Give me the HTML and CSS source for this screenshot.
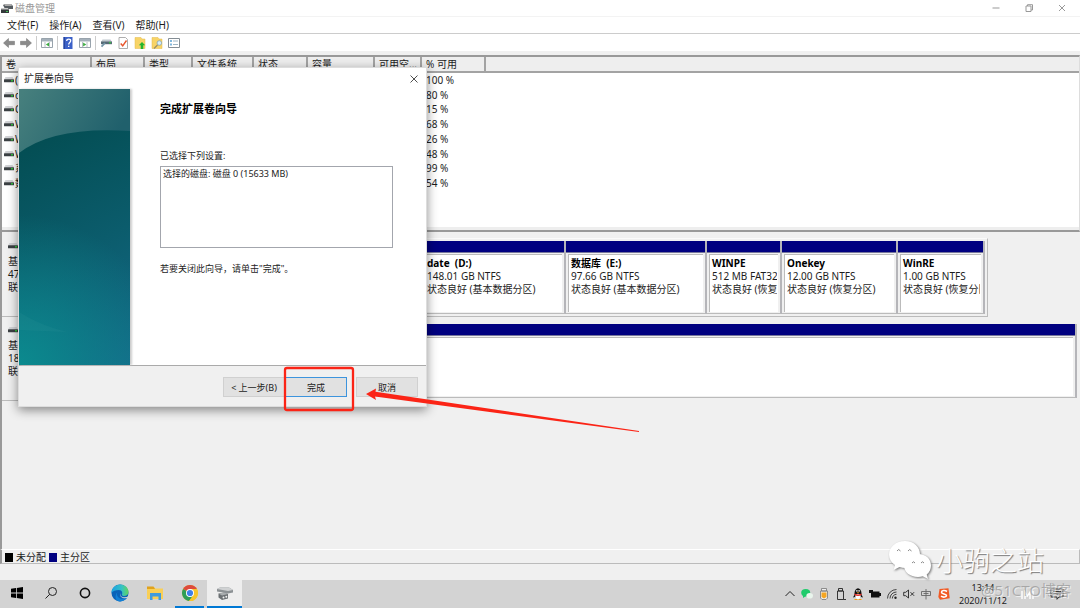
FILE: index.html
```html
<!DOCTYPE html>
<html lang="zh-CN">
<head>
<meta charset="utf-8">
<title>磁盘管理</title>
<link rel="stylesheet" href="styles.css">
</head>
<body>
<svg class="defs" aria-hidden="true">
  <defs>
    <symbol id="drive" viewBox="0 0 10 6"><path d="M1.500 0h7L10 2.500H0z" fill="#d2d3d6"/><rect y="2.300" width="10" height="3" rx=".5" fill="#3c4144"/><rect x="7" y="3" width="2" height="1.500" fill="#2fc13a"/></symbol>
    <symbol id="chat" viewBox="0 0 44 40">
      <path d="M17 1C8 1 1 7 1 14.500c0 4.500 2.300 8 6 10.500L5.500 30l6-3c2 .6 4 1 6 1C26 28 32 22 32 14.500 32 7 26 1 17 1z"/>
      <path d="M30 14c-8 0-14 5-14 11.500S22 37 30 37c1.700 0 3.300-.2 4.800-.7L40 39l-1.300-4.500C41.500 32.500 43 29 43 25.500 43 19 38 14 30 14z"/>
    </symbol>
  </defs>
</svg>

<main class="app">
  <header class="titlebar">
    <svg class="app-icon" viewBox="0 0 12 11"><path d="M2 2l2-1h6l2 2v3H4z" fill="#555b5f"/><path d="M3 1h7l1 2H4z" fill="#aaa"/><path d="M1 5h6l1 2v3H0V7z" fill="#33383a"/><path d="M1 5h6l.7 1.500H.6z" fill="#c8c8c8"/><rect x="5" y="8" width="2" height="1" fill="#4b5"/></svg>
    <h1 class="title">磁盘管理</h1>
    <div class="window-controls">
      <button class="ctl" aria-label="最小化"><svg viewBox="0 0 8 8"><path d="M.5 4h7"/></svg></button>
      <button class="ctl" aria-label="还原"><svg viewBox="0 0 8 8"><path d="M1 2h5v5.500H1zM2.500 2V.7h5V6H6"/></svg></button>
      <button class="ctl" aria-label="关闭"><svg viewBox="0 0 8 8"><path d="M1 1l6 6M7 1L1 7"/></svg></button>
    </div>
  </header>

  <nav class="menubar">
    <button>文件(F)</button><button>操作(A)</button><button>查看(V)</button><button>帮助(H)</button>
  </nav>

  <div class="toolbar">
    <button aria-label="后退"><svg viewBox="0 0 12 12"><path d="M.5 6l5-4.500v2.800h6v3.400h-6v2.800z" fill="#8b8b8b" stroke="#727272" stroke-width=".5"/></svg></button>
    <button aria-label="前进"><svg viewBox="0 0 12 12"><path d="M11.500 6l-5-4.500v2.800h-6v3.400h6v2.800z" fill="#8b8b8b" stroke="#727272" stroke-width=".5"/></svg></button>
    <span class="sep"></span>
    <button aria-label="显示控制台树"><svg viewBox="0 0 12 12"><path d="M.5 1.500h11v9H.5z" fill="#fff" stroke="#98a3ac"/><path d="M1 2h10v2.500H1z" fill="#a4b0ba"/><path d="M4 5v5.500M8.500 5v5.500" stroke="#a5afb7" stroke-width=".8"/><path d="M4.800 7.500L8 5.500v4z" fill="#3dad42"/></svg></button>
    <span class="sep"></span>
    <button aria-label="帮助"><svg viewBox="0 0 12 12"><path d="M1.500 0h9v12h-9z" fill="#3c61c8"/><path d="M1.500 0H3v12H1.500z" fill="#2747a1"/><path d="M4.700 4c0-2.600 4-2.400 4-.2C8.700 5.500 6.700 5.500 6.700 7.500M6.700 8.700v1.200" stroke="#fff" stroke-width="1.300" fill="none"/></svg></button>
    <button aria-label="操作窗格"><svg viewBox="0 0 12 12"><path d="M.5 1.500h11v9H.5z" fill="#fff" stroke="#98a3ac"/><path d="M1 2h10v2.500H1z" fill="#a4b0ba"/><path d="M3.500 5v5.500M8 5v5.500" stroke="#a5afb7" stroke-width=".8"/><path d="M7.300 7.500L4.100 5.500v4z" fill="#3dad42"/></svg></button>
    <span class="sep"></span>
    <button aria-label="连接"><svg viewBox="0 0 12 12"><path d="M2.500 2.500h8L12 5H1z" fill="#bfc8cd"/><path d="M1 4.500h11v2.700H1z" fill="#566a76"/><rect x="9" y="5" width="2" height="1.300" fill="#38bc44"/><path d="M5 6L1.500 9.700" stroke="#7395a7" stroke-width="1.800"/></svg></button>
    <button aria-label="检查"><svg viewBox="0 0 12 12"><path d="M2 .5h6.500l2 2v9H2z" fill="#fff" stroke="#999" stroke-width=".8"/><path d="M3.700 6.500l2 2.300L9.500 3.500" stroke="#e8552c" stroke-width="1.400" fill="none"/></svg></button>
    <button aria-label="上移"><svg viewBox="0 0 12 12"><path d="M1 .5h6L8 2h3v9.500H1z" fill="#f8d467" stroke="#e3ba4c" stroke-width=".5"/><path d="M8 5l3.200 3.300H9.300V12H6.700V8.300H4.800z" fill="#23b52e"/></svg></button>
    <button aria-label="查找"><svg viewBox="0 0 12 12"><path d="M1 .5h6L8 2h3v9.500H1z" fill="#f8d467" stroke="#e3ba4c" stroke-width=".5"/><circle cx="8.300" cy="6" r="2.300" fill="#d6eefb" stroke="#84a5b8" stroke-width=".8"/><path d="M6.500 8L3 11.500" stroke="#9b8e66" stroke-width="1.300"/></svg></button>
    <button aria-label="属性"><svg viewBox="0 0 12 12"><path d="M.5 1.500h11v9H.5z" fill="#fff" stroke="#848d94"/><path d="M2 3h2v2H2zM2 6.500h2v2H2z" fill="#80b7dd"/><path d="M5 4h5M5 7.500h5" stroke="#9eb5c5"/></svg></button>
  </div>

  <section class="volumes">
    <table class="volume-table">
      <colgroup><col class="c-name"><col class="c-layout"><col class="c-type"><col class="c-fs"><col class="c-state"><col class="c-size"><col class="c-free"><col class="c-pct"><col></colgroup>
      <thead><tr><th>卷</th><th>布局</th><th>类型</th><th>文件系统</th><th>状态</th><th>容量</th><th>可用空...</th><th>% 可用</th><th class="rest"></th></tr></thead>
      <tbody>
        <tr><td><svg class="drive"><use href="#drive"/></svg>(C:)</td><td colspan="6"></td><td>100 %</td><td></td></tr>
        <tr><td><svg class="drive"><use href="#drive"/></svg>date</td><td colspan="6"></td><td>80 %</td><td></td></tr>
        <tr><td><svg class="drive"><use href="#drive"/></svg>Onekey</td><td colspan="6"></td><td>15 %</td><td></td></tr>
        <tr><td><svg class="drive"><use href="#drive"/></svg>Windows</td><td colspan="6"></td><td>68 %</td><td></td></tr>
        <tr><td><svg class="drive"><use href="#drive"/></svg>WINPE</td><td colspan="6"></td><td>26 %</td><td></td></tr>
        <tr><td><svg class="drive"><use href="#drive"/></svg>WinRE</td><td colspan="6"></td><td>48 %</td><td></td></tr>
        <tr><td><svg class="drive"><use href="#drive"/></svg>系统</td><td colspan="6"></td><td>99 %</td><td></td></tr>
        <tr><td><svg class="drive"><use href="#drive"/></svg>数据库</td><td colspan="6"></td><td>54 %</td><td></td></tr>
      </tbody>
    </table>
  </section>

  <section class="disks">
    <article class="disk">
      <div class="disk-label"><svg class="drive"><use href="#drive"/></svg><p>基本</p><p>476 GB</p><p>联机</p></div>
      <div class="disk-frame framed">
        <div class="part"><div class="bar"></div><div class="part-body"></div></div>
        <div class="part"><div class="bar"></div><div class="part-body"><b>date&nbsp; (D:)</b><p>148.01 GB NTFS</p><p>状态良好 (基本数据分区)</p></div></div>
        <div class="part"><div class="bar"></div><div class="part-body"><b>数据库&nbsp; (E:)</b><p>97.66 GB NTFS</p><p>状态良好 (基本数据分区)</p></div></div>
        <div class="part"><div class="bar"></div><div class="part-body"><b>WINPE</b><p>512 MB FAT32</p><p>状态良好 (恢复分区)</p></div></div>
        <div class="part"><div class="bar"></div><div class="part-body"><b>Onekey</b><p>12.00 GB NTFS</p><p>状态良好 (恢复分区)</p></div></div>
        <div class="part"><div class="bar"></div><div class="part-body"><b>WinRE</b><p>1.00 GB NTFS</p><p>状态良好 (恢复分区)</p></div></div>
      </div>
    </article>
    <article class="disk">
      <div class="disk-label"><svg class="drive"><use href="#drive"/></svg><p>基本</p><p>1863 GB</p><p>联机</p></div>
      <div class="disk-frame single">
        <div class="part"><div class="bar"></div><div class="part-body"></div></div>
      </div>
    </article>
  </section>

  <div class="legend"><span class="swatch black"></span><span>未分配</span><span class="swatch navy"></span><span>主分区</span></div>
  <div class="statusbar"></div>
</main>

<footer class="taskbar">
  <button class="task narrow" aria-label="开始"><svg viewBox="0 0 12 12"><path d="M0 1.800L5 1v4.600H0zM5.800.9L12 0v5.600H5.800zM0 6.400h5V11l-5-.8zM5.800 6.400H12V12l-6.200-.9z" fill="#000"/></svg></button>
  <button class="task narrow" aria-label="搜索"><svg viewBox="0 0 12 12"><circle cx="7.500" cy="4.500" r="4" fill="none" stroke="#222"/><path d="M4.600 7.400L.5 11.500" stroke="#222"/></svg></button>
  <button class="task narrow" aria-label="Cortana"><svg viewBox="0 0 12 12"><circle cx="6" cy="6" r="4.600" fill="none" stroke="#111" stroke-width="1.600"/></svg></button>
  <button class="task big" aria-label="Edge"><svg viewBox="0 0 18 18"><defs><linearGradient id="e1" x1="0" x2="1"><stop offset="0" stop-color="#1ba1e2"/><stop offset=".6" stop-color="#35c1c5"/><stop offset="1" stop-color="#62d65a"/></linearGradient></defs><circle cx="9" cy="9" r="8.500" fill="#0b63b8"/><path d="M.5 9C.5 4 4.500.5 9.300.5c5 0 8.200 3.800 8.200 7.300 0 2.800-2 4.200-4.300 4.200-1.700 0-2.500-.7-2.300-1.500.9-1.500.3-4.500-3-4.500C4.500 6 1.500 7 .5 9z" fill="url(#e1)"/><path d="M6.500 8c-2 3.700 1.500 8 7.500 6.500.8-.2 1.800-.9 2.300-1.200-1 2-3.700 4.200-7.300 4.200C4.500 17.500 3 12 6.500 8z" fill="#1280d6"/><path d="M9.500 8.500c-1 1.500 0 4 2.500 4.700 2 .4 4 .1 6-1.200l-.5 1.300c-1.500.8-3 1.200-4.500 1C10 14 8 11 9.500 8.500z" fill="#d3d3d3"/></svg></button>
  <button class="task big" aria-label="文件资源管理器"><svg viewBox="0 0 18 18"><path d="M1 3h7l1.500 1.500H17V15H1z" fill="#f9cf57"/><path d="M1 2.500h6.500L9 5H1z" fill="#e0a21c"/><path d="M4 9h11v7h-2.500v-3.500h-6V16H4z" fill="#3f9be0"/></svg></button>
  <button class="task big running" aria-label="Chrome"><svg viewBox="0 0 18 18"><circle cx="9" cy="9" r="8" fill="#f7c52c"/><path d="M9 9L2.070 5A8 8 0 0 1 15.930 5z" fill="#dd4a3d"/><path d="M9 9L2.070 5A8 8 0 0 0 8 16.940L12.500 11z" fill="#2f9e56"/><path d="M9 5h6.930A8 8 0 0 1 8.200 17L12.500 11z" fill="#f7c52c"/><circle cx="9" cy="9" r="4" fill="#fff"/><circle cx="9" cy="9" r="3.100" fill="#3f7fe8"/></svg></button>
  <button class="task big running active" aria-label="磁盘管理"><svg viewBox="0 0 18 18"><path d="M1 5l3-1.500h9L17 6v2.500l-5 1L1 7.500z" fill="#8c9194"/><path d="M1 5l3-1.500h9L17 6l-5 1z" fill="#d0d2d3"/><path d="M2.500 9.500L9 8.500l3 1.500v4.500L6 16l-3.500-2.500z" fill="#6b7073"/><path d="M2.500 9.500L9 8.500l3 1.500-6 1.500z" fill="#a9adaf"/><circle cx="7.500" cy="13.500" r="1" fill="#eee"/><circle cx="10.300" cy="12.800" r="1" fill="#eee"/></svg></button>

  <div class="tray">
    <button aria-label="显示隐藏的图标"><svg viewBox="0 0 12 12"><path d="M1.500 8L6 3.500 10.500 8" fill="none" stroke="#222"/></svg></button>
    <button aria-label="微信"><svg viewBox="0 0 12 12"><ellipse cx="4.700" cy="4.700" rx="4.500" ry="3.700" fill="#1fcb6b"/><path d="M2 7v3l3-2z" fill="#1fcb6b"/><ellipse cx="8.700" cy="7.700" rx="3.300" ry="2.800" fill="#e9f5ec"/></svg></button>
    <button aria-label="U盘"><svg viewBox="0 0 12 12"><path d="M3.500.5h5V3h-5zM2.500 3h7v7l-1.500 1.500H4L2.500 10z" fill="#eee" stroke="#777" stroke-width=".8"/><path d="M3.500 4.500h5V9L6 10.500 3.500 9z" fill="#f5a623"/></svg></button>
    <button aria-label="弹出设备"><svg viewBox="0 0 12 12"><path d="M3.500.5h4V3h-4zM2.500 3h6v8.500h-6zM8.500 11.500H11" fill="none" stroke="#222" stroke-width=".9"/></svg></button>
    <button aria-label="QQ"><svg viewBox="0 0 12 12"><ellipse cx="6" cy="5.500" rx="3.500" ry="5.300" fill="#111"/><path d="M2.800 6L1 9.500l2-.5M9.200 6L11 9.500 9 9" fill="#111"/><ellipse cx="6" cy="8.500" rx="2.700" ry="2.800" fill="#fff"/><path d="M2.500 5.500Q6 7.500 9.500 5.500v1.500Q6 9 2.500 7z" fill="#e32a24"/><path d="M2.500 11h3v1h-3zM6.500 11h3v1h-3zM4.500 4.200h3L6 5.300z" fill="#f5a21b"/><circle cx="4.900" cy="2.900" r=".8" fill="#fff"/><circle cx="7.100" cy="2.900" r=".8" fill="#fff"/></svg></button>
    <button aria-label="电池"><svg viewBox="0 0 12 12"><path d="M2 3.500h8.500V5H12v3h-1.500v1.500H2zM0 2h4v3H0z" fill="#111"/></svg></button>
    <button aria-label="网络"><svg viewBox="0 0 12 12"><path d="M1.500 10.500a9 9 0 0 1 9-9M4 10.500A6.500 6.500 0 0 1 10.500 4M6.300 10.500a4.200 4.200 0 0 1 4.200-4.200" fill="none" stroke="#333" stroke-width=".9"/><circle cx="9.500" cy="9.700" r="1.200" fill="#222"/></svg></button>
    <button aria-label="静音"><svg viewBox="0 0 12 12"><path d="M.7 4.300h2L5.500 2v8L2.700 7.700h-2zM7.500 4.200l3.600 3.600M11.100 4.200L7.500 7.800" fill="none" stroke="#222" stroke-width=".9"/></svg></button>
    <button aria-label="输入法"><svg viewBox="0 0 12 12"><path d="M1.500 3.500h9v4h-9zM6 1v10.500M3.500 5.500h5" fill="none" stroke="#666" stroke-width=".9"/></svg></button>
    <button class="sogou" aria-label="搜狗输入法"><svg viewBox="0 0 12 12"><path d="M1.500 1L10.500.3l1.200 10L2 11.700.3 9z" fill="#f15a24"/><path d="M9 3.500C7 2 3.500 2.300 3.500 4.200c0 2 5 1.400 5 3.400 0 1.700-3.500 2-5.500.6" fill="none" stroke="#fff" stroke-width="1.600"/></svg></button>
    <button class="clock"><span>13:14</span><span>2020/11/12</span></button>
    <button class="ime" aria-label="语言"><svg viewBox="0 0 14 12"><path d="M2 3v8M5 11V4l2.500 4L10 4v7M13 3v8" fill="none" stroke="#fff" stroke-width="1.400"/></svg></button>
    <button class="notify" aria-label="通知"><svg viewBox="0 0 14 12"><path d="M1 1h12v8H9l-2 2.300V9H1zM3 3.500h8M3 6h8" fill="none" stroke="#222" stroke-width=".9"/></svg></button>
  </div>
</footer>

<section class="dialog" role="dialog" aria-labelledby="wizard-title">
  <header class="dialog-title">
    <span id="wizard-title">扩展卷向导</span>
    <button class="dialog-close" aria-label="关闭"><svg viewBox="0 0 8 8"><path d="M.5.5l7 7M7.500.5l-7 7" stroke="#222" stroke-width=".8"/></svg></button>
  </header>
  <div class="dialog-main">
    <svg class="banner" viewBox="0 0 111 276" preserveAspectRatio="none" aria-hidden="true">
      <defs>
        <linearGradient id="b1" gradientUnits="userSpaceOnUse" x1="0" y1="50" x2="111" y2="276"><stop offset="0" stop-color="#034d52"/><stop offset=".5" stop-color="#0b5c6c"/><stop offset="1" stop-color="#156a8a"/></linearGradient>
        <linearGradient id="b2" gradientUnits="userSpaceOnUse" x1="0" y1="10" x2="90" y2="60"><stop offset="0" stop-color="#467f7d"/><stop offset="1" stop-color="#20606c"/></linearGradient>
        <radialGradient id="b3" gradientUnits="userSpaceOnUse" cx="0" cy="276" r="150"><stop offset="0" stop-color="#0b8a8e"/><stop offset="1" stop-color="#0b8a8e" stop-opacity="0"/></radialGradient>
      </defs>
      <rect width="111" height="276" fill="url(#b1)"/><rect width="111" height="276" fill="url(#b3)"/>
      <path d="M0 0h111v42Q35 37 0 64z" fill="url(#b2)"/>
      <path d="M0 223q20 13 48 20l-48-2z" fill="#4aa9a9" opacity=".1"/>
    </svg>
    <div class="wizard">
      <h2>完成扩展卷向导</h2>
      <p class="list-label" id="settings-label">已选择下列设置:</p>
      <ul class="settings" aria-labelledby="settings-label"><li>选择的磁盘: 磁盘 0 (15633 MB)</li></ul>
      <p class="hint">若要关闭此向导，请单击"完成"。</p>
    </div>
  </div>
  <footer class="dialog-actions">
    <button class="btn">&lt; 上一步(B)</button><button class="btn primary">完成</button><button class="btn cancel">取消</button>
  </footer>
</section>

<svg class="annotation" viewBox="0 0 360 72" aria-hidden="true">
  <rect x="2" y="2" width="68" height="42" rx="2" fill="none" stroke="#fb2416" stroke-width="2.300"/>
  <path d="M83 28l10-5.500-.5 3.300L356 65v1L92 30.500l1 3.500z" fill="#fb2416"/>
</svg>

<div class="watermark"><svg class="chat" viewBox="0 0 44 40"><use href="#chat" width="44" height="40"/><path d="M9 11q1.500-3 3.500 0M20 11q1.500-3 3.500 0M24 23q1.500-2.500 3 0M33 23q1.500-2.500 3 0" fill="none" stroke="#888"/></svg><span>小驹之站</span></div>
<div class="blog-mark">@51CTO博客</div>
</body>
</html>
```
FILE: styles.css
```css
* { box-sizing: border-box; }
body {
  margin: 0;
  min-height: 100vh;
  display: flex;
  flex-direction: column;
  position: relative;
  overflow: hidden;
  background: #f0f0f0;
  color: #1c1c1c;
  font: 10px/13px "Noto Sans", "Noto Sans CJK SC", sans-serif;
}
h1, h2, p, ul { margin: 0; padding: 0; font: inherit; }
ul { list-style: none; }
button {
  margin: 0;
  padding: 0;
  border: 0;
  background: none;
  color: inherit;
  font: inherit;
  display: flex;
  align-items: center;
  justify-content: center;
}
svg { display: block; flex: none; }
.defs { position: absolute; width: 0; height: 0; }

.app { flex: 1; display: flex; flex-direction: column; }
.titlebar { display: flex; align-items: center; height: 17px; padding-left: 1px; background: #fff; border-bottom: 1px solid #f3f3f3; color: #999; }
.app-icon { width: 12px; height: 11px; }
.title { padding-left: 2px; }
.window-controls { display: flex; margin-left: auto; padding-right: 2px; }
.ctl { width: 33px; height: 16px; }
.ctl svg { width: 8px; height: 8px; fill: none; stroke: #999; stroke-width: 1; }

.menubar { display: flex; gap: 11px; height: 17px; padding-left: 7px; background: #fff; border-bottom: 1px solid #ccc; }
.toolbar { display: flex; align-items: center; height: 17px; padding-left: 3px; background: #fff; gap: 5px; }
.toolbar svg { width: 12px; height: 12px; }
.toolbar .sep { width: 1px; height: 14px; background: #ccc; margin: 0 -1px; }

.volumes { margin-top: 4px; min-height: 177px; background: #fff; border: 1px solid #999; border-width: 2px 1px 2px 2px; border-right-color: #ddd; box-shadow: inset 0 -3px #eee; }
.volume-table { width: 100%; height: 134px; table-layout: fixed; border-collapse: separate; border-spacing: 0; }
.volume-table th { height: 16px; padding: 1px 0 0 4px; background: #eee; border-right: 2px solid #a3a3a3; border-bottom: 2px solid #a3a3a3; text-align: left; font-weight: 400; line-height: 13px; white-space: nowrap; }
.volume-table th.rest { border-right: 0; }
.volume-table td { padding: 0 0 0 4px; line-height: 13px; white-space: nowrap; overflow: hidden; }
.volume-table td:first-child { padding-left: 2px; }
.volume-table .drive { display: inline-block; margin-right: 1px; vertical-align: 1px; }
.c-name { width: 90px; }
.c-layout { width: 53px; }
.c-type { width: 48px; }
.c-fs { width: 61px; }
.c-state { width: 54px; }
.c-size { width: 67px; }
.c-free { width: 47px; }
.c-pct { width: 64px; }
.drive { width: 10px; height: 6px; }

.disks { flex: 1; padding-top: 1px; border-left: 2px solid #999; }
.disk { display: flex; height: 84px; }
.disk-label { width: 104px; padding: 10px 0 0 6px; border-bottom: 1px solid #bbb; }
.disk-label .drive { margin-bottom: 6px; }
.disk-frame { flex: 1; display: grid; margin: 5px 92px 0 0; }
.framed { grid-template-columns: 315fr 144fr 141fr 75fr 116fr 87fr; padding: 2px 2px 2px 0; border: 1px solid #bbb; border-top-color: #fafafa; }
.single { margin: 7px 3px 3px 0; }
.part { display: flex; flex-direction: column; min-width: 0; border-right: 2px solid #b5b5b9; border-bottom: 1px solid #bbb; }
.bar { height: 12px; background: #000080; border-bottom: 1px solid #77779c; }
.part-body { flex: 1; margin: 1px 2px 1px 2px; padding: 2px 1px 0 2px; background: #fff; border-top: 1px solid #bbb; border-left: 1px solid #bbb; white-space: nowrap; overflow: hidden; }
.part-body p { overflow: hidden; }
.part-body b { display: block; color: #000; }

.legend { display: flex; align-items: center; gap: 3px; height: 15px; padding: 1px 0 0 3px; border: 1px solid #bbb; border-top-color: #fff; border-left: 2px solid #999; }
.swatch { width: 8px; height: 9px; }
.black { background: #000; }
.navy { background: #000080; }
.statusbar { height: 16px; }

.taskbar { display: flex; height: 28px; background: #d3d3d3; }
.task { width: 35px; border-bottom: 2px solid transparent; }
.narrow { width: 34px; }
.task svg { width: 12px; height: 12px; }
.big svg { width: 18px; height: 18px; }
.running { width: 29px; margin: 0 3px; border-bottom-color: #0078d4; }
.active { width: 35px; margin: 0; background: #eee; }
.tray { display: flex; margin-left: auto; padding-right: 8px; }
.tray button { width: 17px; }
.tray svg { width: 12px; height: 12px; }
.tray .sogou { width: 20px; }
.tray .clock { width: 58px; flex-direction: column; font-size: 9px; line-height: 13px; }
.tray .ime, .tray .notify { width: 30px; }
.tray .ime svg, .tray .notify svg { width: 14px; }

.dialog { position: absolute; left: 18px; top: 67px; width: 409px; background: #fff; border: 1px solid #ddd; box-shadow: 0 3px 10px rgba(0, 0, 0, .45); font-size: 9px; }
.dialog-title { display: flex; align-items: center; justify-content: space-between; height: 21px; padding: 0 8px 0 5px; font-size: 10px; }
.dialog-close svg { width: 8px; height: 8px; }
.dialog-main { display: flex; height: 277px; border-bottom: 1px solid #aaa; }
.banner { width: 111px; height: 276px; box-shadow: 2px 0 2px #ccc; }
.wizard { flex: 1; padding: 12px 33px 0 30px; }
.wizard h2 { font-size: 11px; line-height: 15px; font-weight: 700; color: #000; }
.list-label { padding-top: 33px; }
.settings { height: 82px; margin-top: 4px; padding: 0 2px; border: 1px solid #a3a6ad; }
.hint { padding-top: 14px; }
.dialog-actions { display: flex; justify-content: flex-end; height: 40px; padding: 11px 8px 0 0; background: #f0f0f0; }
.btn { width: 62px; height: 20px; background: #e1e1e1; border: 1px solid #d0d0d0; }
.primary { border-color: #3d94dd; }
.cancel { margin-left: 9px; }

.annotation { position: absolute; left: 283px; top: 366px; width: 360px; height: 72px; }
.watermark { position: absolute; right: 36px; bottom: 28px; display: flex; align-items: center; gap: 4px; font-family: "Noto Sans CJK SC", sans-serif; font-size: 27px; font-weight: 300; line-height: 40px; color: #fff; text-shadow: 1px 1px 1px #777; }
.chat { width: 44px; height: 40px; fill: #fff; filter: drop-shadow(1px 1px 1px #777); }
.blog-mark { position: absolute; right: 9px; bottom: 8px; font-size: 15px; line-height: 20px; color: rgba(130, 130, 130, .55); text-shadow: 1px 1px rgba(255, 255, 255, .6); }
```
